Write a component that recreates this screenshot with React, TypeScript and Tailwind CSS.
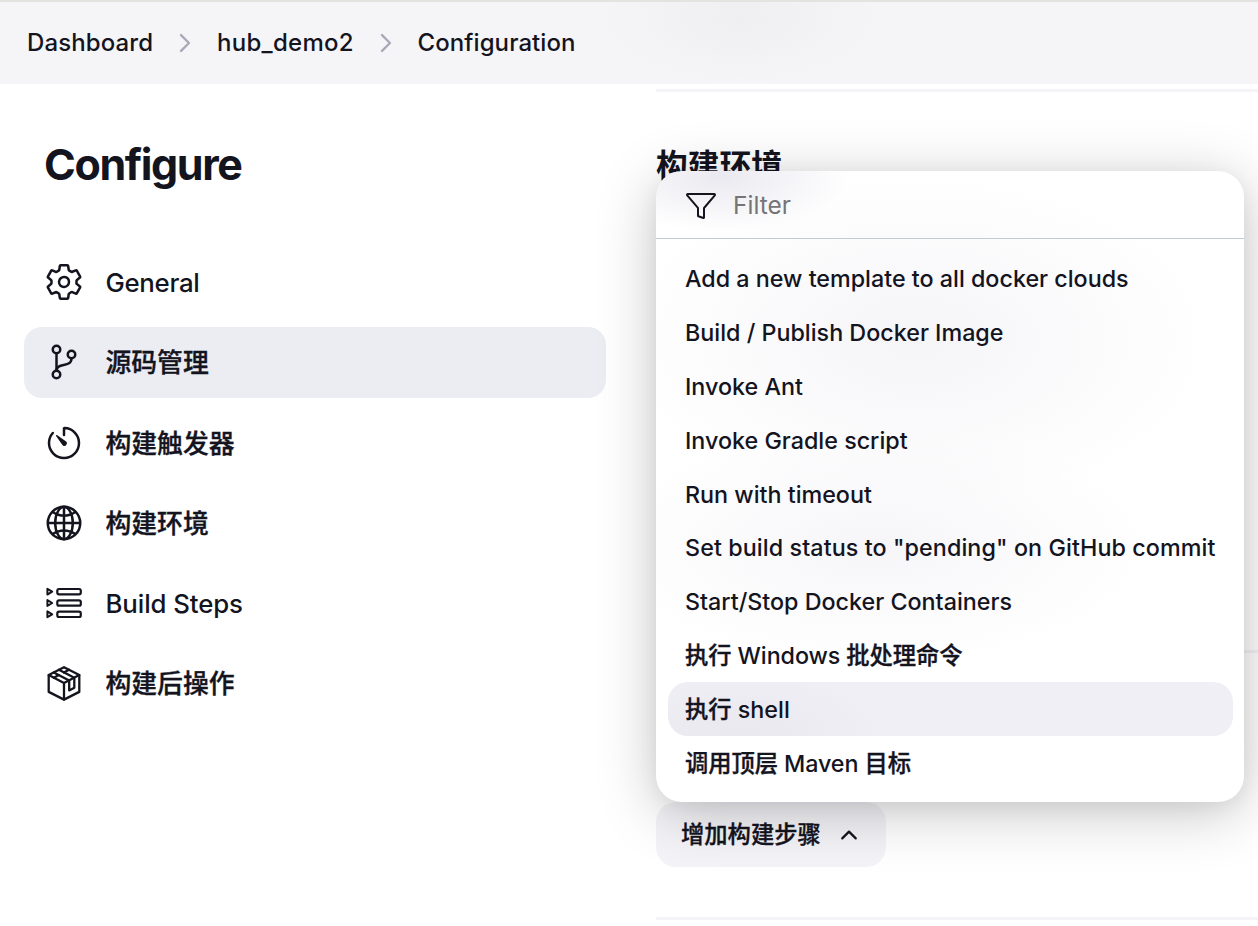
import type { ReactNode } from "react";
import {
  IoSettingsOutline,
  IoGitBranchOutline,
  IoTimerOutline,
  IoGlobeOutline,
  IoFunnelOutline,
  IoChevronForward,
  IoChevronUp,
} from "react-icons/io5";

function StepsIcon() {
  return (
    <svg viewBox="0 0 36 36" className="size-9" fill="none" stroke="currentColor" strokeWidth="2.2" strokeLinejoin="round">
      {[4, 15.3, 26.6].map((y) => (
        <g key={y}>
          <path d={`M1.400 ${y - 0.2}v5.800l4.800-2.900z`} strokeWidth="2" />
          <rect x="11.3" y={y} width="23.5" height="5.4" rx="1.8" />
        </g>
      ))}
    </svg>
  );
}

function PackageIcon() {
  return (
    <svg viewBox="0 0 36 36" className="size-9" fill="none" stroke="currentColor" strokeWidth="2.300" strokeLinejoin="round" strokeLinecap="round">
      <path d="M18 2.200 L33.300 10.100 V26.900 L18 34.600 L2.700 26.900 V10.100 Z" />
      <path d="M2.700 10.100 L18 18.100 L33.300 10.100 M18 18.100 V34.600" />
      <path d="M7.800 7.500 L23.200 15.500 V25.400 L28.300 22.700 V12.700 L12.900 4.800" />
      <path d="M7.800 12.800 L12.900 10.100 M17.900 7.500 L23 4.800" />
    </svg>
  );
}

function Label({ text }: { text: string }) {
  return (
    <>
      {text.split(/([\u4e00-\u9fff]+)/).map((part, i) =>
        i % 2 ? (
          <span key={i} className="[-webkit-text-stroke:0.35px_#14141f]">
            {part}
          </span>
        ) : (
          part
        ),
      )}
    </>
  );
}

type NavItem = { label: string; icon: ReactNode; tracking?: string; active?: boolean };

const nav: NavItem[] = [
  { label: "General", icon: <IoSettingsOutline className="-m-0.5 size-10" />, tracking: "tracking-[-0.3px]" },
  { label: "源码管理", icon: <IoGitBranchOutline className="-m-0.5 size-10" />, active: true },
  { label: "构建触发器", icon: <IoTimerOutline className="-m-0.5 size-10" /> },
  { label: "构建环境", icon: <IoGlobeOutline className="-m-0.5 size-10" /> },
  { label: "Build Steps", icon: <StepsIcon />, tracking: "tracking-[-0.1px]" },
  { label: "构建后操作", icon: <PackageIcon /> },
];

const steps = [
  { label: "Add a new template to all docker clouds" },
  { label: "Build / Publish Docker Image" },
  { label: "Invoke Ant" },
  { label: "Invoke Gradle script" },
  { label: "Run with timeout" },
  { label: 'Set build status to "pending" on GitHub commit', tracking: "tracking-[0.09px]" },
  { label: "Start/Stop Docker Containers" },
  { label: "执行 Windows 批处理命令", tracking: "tracking-[-0.08px]" },
  { label: "执行 shell", active: true },
  { label: "调用顶层 Maven 目标", tracking: "tracking-[-0.08px]" },
];

export default function App() {
  return (
    <div className="relative flex h-[926px] w-[1258px] flex-col overflow-hidden bg-white font-['Inter','Noto_Sans_CJK_SC',sans-serif] font-medium text-[#14141f]">
      <header className="flex h-[84px] shrink-0 items-center border-t-2 border-[#e3e3e0] bg-[#f5f5f8] bg-[radial-gradient(ellipse_140px_65px_at_740px_16px,#efeff2,#f5f5f8)] bg-no-repeat pl-[27px] text-[24px] leading-8">
        <span className="w-[126px] tracking-[0.1px] whitespace-nowrap">Dashboard</span>
        <IoChevronForward className="mx-[18px] size-7 text-[#a9a9b8] [&_path]:[stroke-width:44px]" />
        <span className="w-[136.500px] tracking-[0.28px] whitespace-nowrap">hub_demo2</span>
        <IoChevronForward className="mx-[18px] size-7 text-[#a9a9b8] [&_path]:[stroke-width:44px]" />
        <span className="tracking-[0.08px] whitespace-nowrap">Configuration</span>
      </header>

      <div className="flex flex-1">
        <aside className="w-[656px] shrink-0 pl-6 pt-[53px]">
          <h1 className="pl-5 text-[43px] leading-[54px] font-bold tracking-[-1.4px]">Configure</h1>
          <nav className="mt-14 flex w-[582px] flex-col gap-[9.300px]">
            {nav.map((item) => (
              <a
                key={item.label}
                className={`flex h-[71px] items-center gap-[23.500px] rounded-[18px] pb-px pl-[22px] text-[25.800px] leading-9 ${item.active ? "bg-[#ecedf3]" : ""}`}
              >
                {item.icon}
                <span className={`pt-0.5 whitespace-nowrap ${item.tracking ?? ""}`}>
                  <Label text={item.label} />
                </span>
              </a>
            ))}
          </nav>
        </aside>

        <main className="flex flex-1 flex-col pt-[5px]">
          <div className="h-[3px] bg-[#f3f3f8]" />
          <h2 className="mt-[56px] text-[31.700px] leading-9 font-bold">构建环境</h2>
          <div className="mt-[466px] h-[3px] bg-[#f3f3f8]" />
          <button className="mt-[149px] flex h-[65px] w-[230px] items-center rounded-[20px] bg-[#f4f4f8] pt-0.5 pl-[25px] text-[23.300px]">
            <span className="w-[156px] text-left">
              <Label text="增加构建步骤" />
            </span>
            <IoChevronUp className="mb-0.5 size-6" />
          </button>
          <div className="mt-[50px] h-[3px] bg-[#f3f3f8]" />
        </main>
      </div>

      <div className="absolute top-[171px] left-[656px] flex h-[631px] w-[588px] flex-col rounded-[26px] bg-white bg-[radial-gradient(ellipse_130px_55px_at_65px_5px,#e9e9f0,#e9e9f000),radial-gradient(ellipse_300px_170px_at_260px_170px,#f5f5f8,#f5f5f800),radial-gradient(ellipse_280px_120px_at_220px_375px,#f6f6f9,#f6f6f900)] shadow-[0_10px_60px_rgba(0,0,0,0.23),0_5px_20px_rgba(0,0,0,0.05)]">
        <div className="flex h-[68px] shrink-0 items-center gap-4 border-b border-[#c3cad1] pt-0.5 pl-[29px] text-[24.500px] text-[#757575]">
          <IoFunnelOutline className="size-8 text-[#14141f]" />
          <span className="font-normal">Filter</span>
        </div>
        <ul className="flex flex-col pt-3 pr-[11px] pl-3">
          {steps.map((step) => (
            <li
              key={step.label}
              className={`flex h-[53.900px] items-center rounded-[20px] pt-[3px] pl-[17px] text-[23.300px] whitespace-nowrap ${step.active ? "bg-[#efeff5] bg-[radial-gradient(ellipse_150px_70px_at_70px_54px,#e8e8ee,#efeff5)]" : ""}`}
            >
              <span className={step.tracking ?? ""}>
                <Label text={step.label} />
              </span>
            </li>
          ))}
        </ul>
      </div>
    </div>
  );
}
